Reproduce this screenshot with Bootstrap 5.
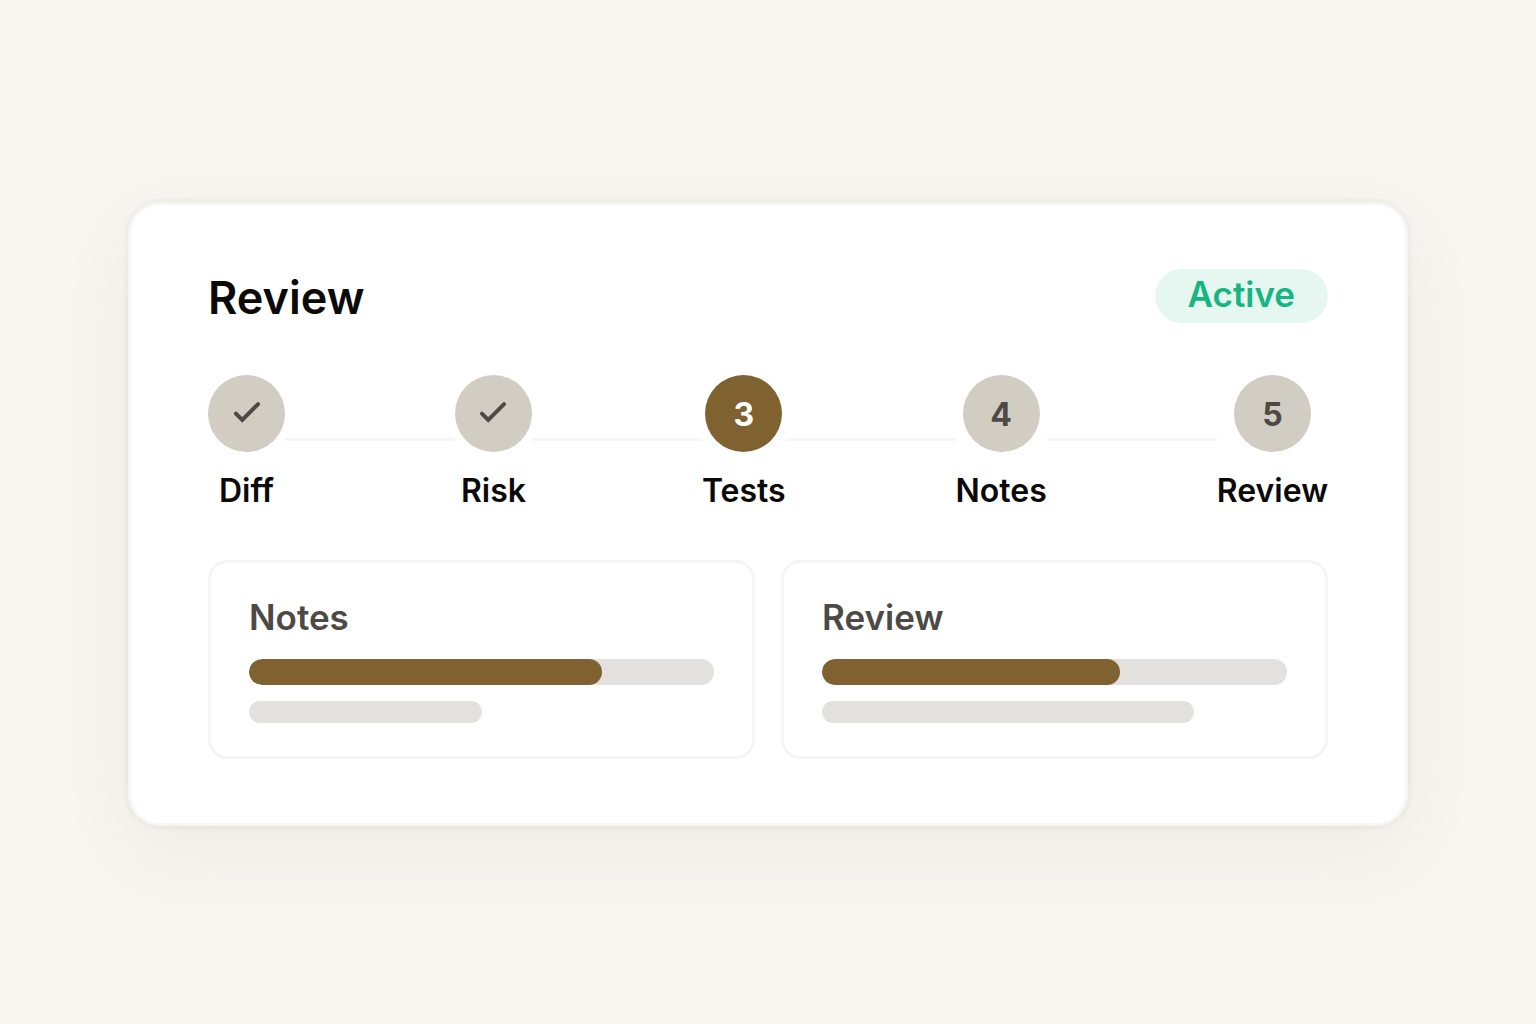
<!DOCTYPE html>
<html lang="en">
<head>
<meta charset="utf-8">
<meta name="viewport" content="width=device-width, initial-scale=1">
<title>Review</title>
<link href="https://cdn.jsdelivr.net/npm/bootstrap@5.3.0/dist/css/bootstrap.min.css" rel="stylesheet">
<style>
  body { font-family: Inter, "Liberation Sans", sans-serif; background: #f9f6f1; color: #0c0a09; }
  .page { padding: 4px 16px 0; }
  .review-card {
    max-width: 1280px; padding: 64px 77px;
    border: 3px solid #f6f6f5; border-radius: 32px;
    box-shadow: 0 0 5px 2px rgba(40, 40, 40, .05), 0 26px 77px rgba(60, 50, 30, .06);
  }
  .review-title { font-size: 45px; line-height: 58px; font-weight: 600; }
  .status-pill { font-size: 35px; line-height: 50px; font-weight: 600; padding: 0 33px 4px; color: #17b581; background: #e6f7f1; }
  .steps { margin: 48px 0 45px; }
  .step-dot { width: 77px; height: 77px; background: #d1cdc3; color: #4d4a46; }
  .step-dot.current { background: #806230; color: #fff; }
  .step-dot svg { width: 38px; height: 38px; margin-bottom: 3px; }
  .step-number { font-size: 32px; line-height: 48px; font-weight: 700; padding-top: 3px; }
  .step-name { margin-top: 15px; font-size: 32px; line-height: 48px; font-weight: 600; }
  .step-line { height: 3px; margin-top: 63px; background: #f6f6f6; }
  .panels { gap: 26px; }
  .panel { padding: 32px 38px 33px; border: 3px solid #f5f5f5; border-radius: 19px; flex-basis: 0; }
  .panel-name { font-size: 35px; line-height: 45px; font-weight: 600; color: #4d4a46; margin-bottom: 19px; }
  .meter { height: 26px; border-radius: 13px; background: #e2e1de; }
  .meter .progress-bar { background: #806230; border-radius: 13px; }
  .stub { height: 22px; margin-top: 16px; border-radius: 11px; background: #e2e1de; }
</style>
</head>
<body>
<main class="page min-vh-100 d-flex align-items-center justify-content-center">
  <section class="review-card bg-white w-100">
    <header class="d-flex justify-content-between align-items-start">
      <h1 class="review-title mb-0">Review</h1>
      <span class="status-pill rounded-pill">Active</span>
    </header>

    <ol class="steps list-unstyled d-flex align-items-start">
      <li class="d-flex flex-column align-items-center">
        <span class="step-dot rounded-circle d-flex align-items-center justify-content-center">
          <svg viewBox="0 0 24 24" fill="none" stroke="currentColor" stroke-width="2.5" stroke-linecap="round" role="img" aria-label="Done"><path d="M5 13l4 4L19 7"/></svg>
        </span>
        <span class="step-name">Diff</span>
      </li>
      <li class="step-line flex-fill" aria-hidden="true"></li>
      <li class="d-flex flex-column align-items-center">
        <span class="step-dot rounded-circle d-flex align-items-center justify-content-center">
          <svg viewBox="0 0 24 24" fill="none" stroke="currentColor" stroke-width="2.5" stroke-linecap="round" role="img" aria-label="Done"><path d="M5 13l4 4L19 7"/></svg>
        </span>
        <span class="step-name">Risk</span>
      </li>
      <li class="step-line flex-fill" aria-hidden="true"></li>
      <li class="d-flex flex-column align-items-center" aria-current="step">
        <span class="step-dot current rounded-circle d-flex align-items-center justify-content-center"><span class="step-number">3</span></span>
        <span class="step-name">Tests</span>
      </li>
      <li class="step-line flex-fill" aria-hidden="true"></li>
      <li class="d-flex flex-column align-items-center">
        <span class="step-dot rounded-circle d-flex align-items-center justify-content-center"><span class="step-number">4</span></span>
        <span class="step-name">Notes</span>
      </li>
      <li class="step-line flex-fill" aria-hidden="true"></li>
      <li class="d-flex flex-column align-items-center">
        <span class="step-dot rounded-circle d-flex align-items-center justify-content-center"><span class="step-number">5</span></span>
        <span class="step-name">Review</span>
      </li>
    </ol>

    <div class="panels d-flex">
      <article class="panel flex-grow-1">
        <h2 class="panel-name">Notes</h2>
        <div class="progress meter" role="progressbar" aria-label="Notes" aria-valuenow="76" aria-valuemin="0" aria-valuemax="100">
          <div class="progress-bar" style="width: 76%"></div>
        </div>
        <div class="stub" style="width: 50%"></div>
      </article>
      <article class="panel flex-grow-1">
        <h2 class="panel-name">Review</h2>
        <div class="progress meter" role="progressbar" aria-label="Review" aria-valuenow="64" aria-valuemin="0" aria-valuemax="100">
          <div class="progress-bar" style="width: 64%"></div>
        </div>
        <div class="stub" style="width: 80%"></div>
      </article>
    </div>
  </section>
</main>
<script src="https://cdn.jsdelivr.net/npm/bootstrap@5.3.0/dist/js/bootstrap.bundle.min.js"></script>
</body>
</html>
